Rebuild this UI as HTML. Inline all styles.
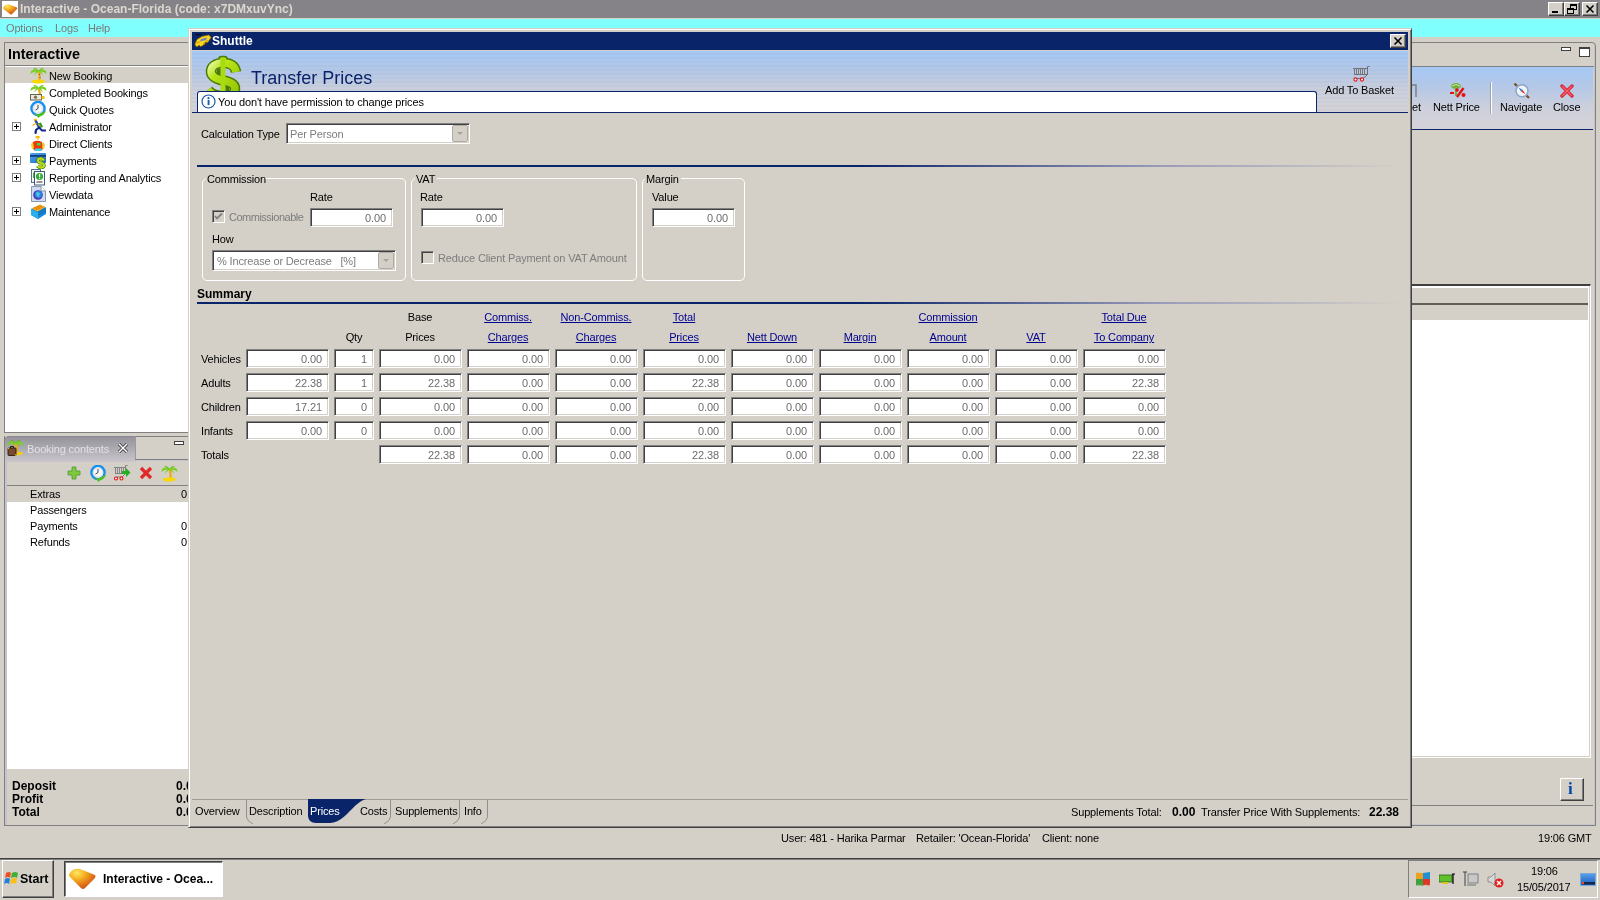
<!DOCTYPE html>
<html><head><meta charset="utf-8"><title>Interactive</title>
<style>
*{margin:0;padding:0;box-sizing:border-box}
html,body{width:1600px;height:900px;overflow:hidden}
body{position:relative;background:#d4d0c8;font-family:"Liberation Sans",sans-serif;font-size:11px;color:#000}
.a{position:absolute}
.t{position:absolute;white-space:nowrap;font-size:11px;line-height:13px;letter-spacing:-0.15px;will-change:transform}
.b{font-weight:bold;font-size:12px;line-height:14px;letter-spacing:0}
.g{color:#7d7d7d}
.f{position:absolute;background:#fff;border:1px solid;border-color:#808080 #fff #fff #808080;box-shadow:inset 1px 1px 0 #404040,inset -1px -1px 0 #d4d0c8}
.f span{position:absolute;right:6px;top:3px;white-space:nowrap;font-size:11px;line-height:13px;color:#6c6c6c;letter-spacing:-0.1px;will-change:transform}
.lk{color:#000090;text-decoration:underline}
.btn{position:absolute;background:#d4d0c8;border:1px solid;border-color:#fff #404040 #404040 #fff;box-shadow:inset -1px -1px 0 #808080}
.grp{position:absolute;border:1px solid #fff;border-radius:5px}
.hl{position:absolute;background:#fff}
</style></head><body>

<!-- ===== Title bar ===== -->
<div class="a" style="left:0;top:0;width:1600px;height:18px;background:#858288"></div>
<div class="a" style="left:2px;top:1px;width:16px;height:16px;background:#fff"></div>
<svg class="a" style="left:2px;top:1px" width="16" height="16"><defs><radialGradient id="tg2" cx="0.3" cy="0.2" r="0.9"><stop offset="0" stop-color="#ffe860"/><stop offset="0.35" stop-color="#f4b020"/><stop offset="0.7" stop-color="#e07018"/><stop offset="1" stop-color="#c04810"/></radialGradient></defs><path d="M1.5 6 Q3 3 7 3.5 L15 6.5 Q15.5 7.5 15 8 L10 13 Q9 14 8 13 L1.5 8 Q1 7 1.5 6Z" fill="url(#tg2)"/></svg>
<div class="t b" style="left:20px;top:2px;color:#dcd8d0">Interactive - Ocean-Florida (code: x7DMxuvYnc)</div>
<div class="btn" style="left:1548px;top:2px;width:16px;height:14px"></div>
<div class="a" style="left:1552px;top:11px;width:6px;height:2px;background:#000"></div>
<div class="btn" style="left:1564px;top:2px;width:16px;height:14px"></div>
<svg class="a" style="left:1564px;top:2px" width="16" height="14"><rect x="6.5" y="2.5" width="6" height="5" fill="none" stroke="#000"/><rect x="6" y="2" width="7" height="2" fill="#000"/><rect x="3.5" y="6.5" width="6" height="5" fill="#d4d0c8" stroke="#000"/><rect x="3" y="6" width="7" height="2" fill="#000"/></svg>
<div class="btn" style="left:1582px;top:2px;width:16px;height:14px"></div>
<svg class="a" style="left:1582px;top:2px" width="16" height="14"><path d="M4.5 3.5 L11.5 10.5 M11.5 3.5 L4.5 10.5" stroke="#000" stroke-width="1.6"/></svg>

<!-- ===== Menu bar ===== -->
<div class="a" style="left:0;top:18px;width:1600px;height:1px;background:#d8d4cc"></div>
<div class="a" style="left:0;top:19px;width:1600px;height:18px;background:#80ffff"></div>
<div class="t" style="left:6px;top:22px;color:#7a7a7a">Options</div>
<div class="t" style="left:55px;top:22px;color:#7a7a7a">Logs</div>
<div class="t" style="left:88px;top:22px;color:#7a7a7a">Help</div>

<!-- ===== Left tree panel ===== -->
<div class="a" style="left:4px;top:42px;width:186px;height:391px;border:1px solid #808080;background:#fff"></div>
<div class="a" style="left:5px;top:43px;width:185px;height:23px;background:#d4d0c8;border-bottom:1px solid #808080"></div>
<div class="a" style="left:5px;top:66px;width:185px;height:1px;background:#fff"></div>
<div class="t b" style="left:8px;top:46px;font-size:14.4px;line-height:16px">Interactive</div>
<div class="a" style="left:5px;top:67px;width:185px;height:16px;background:#d4d0c8"></div>
<div class="t" style="left:49px;top:70px">New Booking</div>
<div class="t" style="left:49px;top:87px">Completed Bookings</div>
<div class="t" style="left:49px;top:104px">Quick Quotes</div>
<div class="t" style="left:49px;top:121px">Administrator</div>
<div class="t" style="left:49px;top:138px">Direct Clients</div>
<div class="t" style="left:49px;top:155px">Payments</div>
<div class="t" style="left:49px;top:172px">Reporting and Analytics</div>
<div class="t" style="left:49px;top:189px">Viewdata</div>
<div class="t" style="left:49px;top:206px">Maintenance</div>
<!-- plus boxes -->
<svg class="a" style="left:11px;top:121px" width="11" height="11"><rect x="1.5" y="1.5" width="8" height="8" fill="#fff" stroke="#808080"/><path d="M3 5.5h5M5.5 3v5" stroke="#000"/></svg>
<svg class="a" style="left:11px;top:155px" width="11" height="11"><rect x="1.5" y="1.5" width="8" height="8" fill="#fff" stroke="#808080"/><path d="M3 5.5h5M5.5 3v5" stroke="#000"/></svg>
<svg class="a" style="left:11px;top:172px" width="11" height="11"><rect x="1.5" y="1.5" width="8" height="8" fill="#fff" stroke="#808080"/><path d="M3 5.5h5M5.5 3v5" stroke="#000"/></svg>
<svg class="a" style="left:11px;top:206px" width="11" height="11"><rect x="1.5" y="1.5" width="8" height="8" fill="#fff" stroke="#808080"/><path d="M3 5.5h5M5.5 3v5" stroke="#000"/></svg>
<!-- tree icons -->
<svg class="a" style="left:30px;top:67px" width="17" height="17"><path d="M8.5 4 Q10 8 9.5 13" stroke="#e8a818" stroke-width="2.2" fill="none"/><path d="M9 7 L10 8 M9.5 10 L10.5 11" stroke="#a05010" stroke-width="1"/><path d="M8.5 3.5 Q5 1 1 4 L0.5 7 Q3 4.5 6 4.5 L3.5 9 Q6 6 8.5 4.5Z" fill="#78d020"/><path d="M8.5 3.5 Q12 1 16 4 L16.5 7 Q14 4.5 11 4.5 L13.5 9 Q11 6 8.5 4.5Z" fill="#78d020"/><path d="M8.5 4 Q6 0 3 1.5 Q6 1.5 8.5 4Z M8.5 4 Q11 0 14 1.5 Q11 1.5 8.5 4Z" fill="#58b818"/><path d="M1.5 14.5 Q3 12 8 12.5 Q14 12 15 14.5 Q13 16.5 8 16.5 Q3 16.5 1.5 14.5Z" fill="#f8d800"/></svg>
<svg class="a" style="left:30px;top:84px" width="17" height="17"><path d="M8.5 4 Q10 8 10 12" stroke="#e8a818" stroke-width="2.2" fill="none"/><path d="M8.5 3.5 Q5 1 1 4 L0.5 7 Q3 4.5 6 4.5 L3.5 9 Q6 6 8.5 4.5Z" fill="#78d020"/><path d="M8.5 3.5 Q12 1 16 4 L16.5 7 Q14 4.5 11 4.5 L13.5 9 Q11 6 8.5 4.5Z" fill="#78d020"/><path d="M8.5 4 Q6 0 3 1.5 Q6 1.5 8.5 4Z M8.5 4 Q11 0 14 1.5 Q11 1.5 8.5 4Z" fill="#58b818"/><rect x="0.5" y="10.5" width="11" height="5.5" fill="#e8ecd8" stroke="#606050"/><circle cx="5.5" cy="13.2" r="1.6" fill="#806868"/><path d="M11.5 12 h3 v3 h-3z" fill="#f0c010"/></svg>
<svg class="a" style="left:30px;top:101px" width="17" height="17"><circle cx="8" cy="7.5" r="6.6" fill="#fff" stroke="#1890f0" stroke-width="2.4"/><circle cx="8" cy="7.5" r="4.6" fill="#f8f8f8" stroke="#c0c8d0" stroke-width="0.6"/><path d="M8 4v3.5l-2.5 1.5" stroke="#404040" stroke-width="1" fill="none"/><path d="M3 12.5 Q8 15 13 11 L16 10 Q14 14.5 10 15.5 L8.5 17 L6 14 Q4 14 3 12.5Z" fill="#50c020"/></svg>
<svg class="a" style="left:30px;top:118px" width="16" height="17"><ellipse cx="5.5" cy="2" rx="1.8" ry="1.6" fill="#f8c820"/><path d="M6 3.5 L9 9" stroke="#3048a8" stroke-width="2.6" stroke-linecap="round"/><path d="M6.5 5 L2.5 7.5" stroke="#f0b020" stroke-width="1.3"/><path d="M8 5.5 L11 4.5 L13 9 L10 10Z" fill="#30a020"/><path d="M8.5 6 L10 9" stroke="#f0c020" stroke-width="1"/><path d="M9 9.5 L6 12 L5.5 15" stroke="#102890" stroke-width="2.2" fill="none" stroke-linecap="round"/><path d="M9 9.5 L12 12.5 L15.5 12.5" stroke="#102890" stroke-width="1.8" fill="none" stroke-linecap="round"/></svg>
<svg class="a" style="left:30px;top:135px" width="16" height="17"><path d="M5.5 2.5 Q7.5 0.5 9.5 2 Q8 3 6.5 2.5 Q9 3.5 7.5 4.5" stroke="#f8b810" stroke-width="1.3" fill="none"/><path d="M3 7 Q7 4.5 12 7 L13.5 13 L11 16 H5 L2.5 13Z" fill="#f03810"/><path d="M1 10 Q1.5 7.5 3 7 L4 13 L2 14Z M15 10 Q14.5 7.5 13 7 L12 13 L14 14Z" fill="#f8d020"/><rect x="7" y="8" width="3.5" height="2.5" fill="#30e040"/><rect x="5" y="13.5" width="6.5" height="2.5" fill="#30d8e8"/></svg>
<svg class="a" style="left:30px;top:152px" width="17" height="17"><defs><linearGradient id="cg" x1="0" y1="0" x2="1" y2="1"><stop offset="0" stop-color="#50a8f0"/><stop offset="1" stop-color="#1868c0"/></linearGradient></defs><rect x="0" y="1" width="16" height="10" rx="1" fill="url(#cg)"/><rect x="0" y="3" width="16" height="1.8" fill="#104080"/><path d="M14 8.5 Q13 6.5 10.5 6.5 Q8 6.5 8 8.5 Q8 10.5 11 11 Q14 11.5 14 13.5 Q14 15.5 11 15.5 Q8.5 15.5 7.5 14" stroke="#4a8010" stroke-width="3.4" fill="none"/><path d="M14 8.5 Q13 6.5 10.5 6.5 Q8 6.5 8 8.5 Q8 10.5 11 11 Q14 11.5 14 13.5 Q14 15.5 11 15.5 Q8.5 15.5 7.5 14" stroke="#c0e020" stroke-width="2" fill="none"/><path d="M11 5 V17" stroke="#a8d018" stroke-width="1.4"/></svg>
<svg class="a" style="left:30px;top:169px" width="17" height="17"><rect x="1.5" y="0.5" width="9" height="13" fill="#f0f4f8" stroke="#507090"/><path d="M3 4 Q5 2 7 4 V9 H3Z" fill="#40b040"/><rect x="4.5" y="2.5" width="10" height="13.5" fill="#fff" stroke="#405870"/><circle cx="9.5" cy="7.5" r="3.6" fill="#30b030"/><rect x="9" y="5" width="1.2" height="3" fill="#fff"/><rect x="9" y="8.8" width="1.2" height="1.2" fill="#fff"/><rect x="6.5" y="12.5" width="6" height="1" fill="#303030"/></svg>
<svg class="a" style="left:30px;top:186px" width="17" height="17"><path d="M1.5 0.5 H11 L15.5 5 V15.5 H1.5Z" fill="#d0dcf0" stroke="#8898b0"/><path d="M11 0.5 V5 H15.5" fill="#fff" stroke="#8898b0"/><circle cx="8" cy="9" r="4.8" fill="#5030b0"/><circle cx="8.5" cy="8.5" r="3.8" fill="#3080e0"/><path d="M6 6.5 Q8.5 5.5 10 7.5 Q8.5 9 9.5 11 Q7 11 6.5 9Z" fill="#40d0e0"/></svg>
<svg class="a" style="left:30px;top:203px" width="17" height="17"><path d="M1 6 L10 2 L16 4.5 L16 11 L8 16 L1 12Z" fill="#1888d8"/><path d="M1 6 L8 9.5 L8 16 L1 12Z" fill="#2ab0f0"/><path d="M1.5 5.5 L10 1.5 L15.5 4 L7.5 8.5Z" fill="#f8c020"/><path d="M3 5.5 L10.5 2.3 M4.5 6.3 L12 3 M6 7.1 L13.5 3.8" stroke="#e07010" stroke-width="0.9"/><path d="M8 9.5 L16 5.5 M8 12 L16 8" stroke="#0a5aa0" stroke-width="0.7"/></svg>

<!-- ===== Booking contents panel ===== -->
<div class="a" style="left:4px;top:436px;width:186px;height:390px;border:1px solid #808080;border-top:none;background:#d4d0c8"></div>
<div class="a" style="left:4px;top:436px;width:132px;height:26px;border-radius:5px 0 0 0;border-left:1px solid #808080;border-top:1px solid #8a8890;background:linear-gradient(#96939c,#a9a7ae 40%,#c9c7cc)"></div>
<div class="a" style="left:136px;top:436px;width:54px;height:1px;background:#808080"></div>
<div class="a" style="left:135px;top:436px;width:1px;height:24px;background:#9a98a0"></div>
<div class="a" style="left:135px;top:459px;width:55px;height:1px;background:#808080"></div><div class="a" style="left:135px;top:460px;width:55px;height:1px;background:#c4c2cc"></div>
<div class="a" style="left:174px;top:441px;width:10px;height:4px;border:1px solid #404040;background:#fff"></div>
<svg class="a" style="left:7px;top:439px" width="17" height="18"><path d="M8.5 4 Q10 8 10 13" stroke="#e8a818" stroke-width="2.2" fill="none"/><path d="M8.5 3.5 Q5 1 1 4 L0.5 7 Q3 4.5 6 4.5 L3.5 9 Q6 6 8.5 4.5Z" fill="#78d020"/><path d="M8.5 3.5 Q12 1 16 4 L16.5 7 Q14 4.5 11 4.5 L13.5 9 Q11 6 8.5 4.5Z" fill="#78d020"/><path d="M8.5 4 Q6 0 3 1.5 Q6 1.5 8.5 4Z M8.5 4 Q11 0 14 1.5 Q11 1.5 8.5 4Z" fill="#58b818"/><path d="M9 14.5 Q11 12.5 14 13 Q16 13.5 16 15 Q13 16.5 9 16Z" fill="#f8d000"/><rect x="1" y="9" width="8" height="7.5" rx="0.8" fill="#7a4a30" stroke="#201008" stroke-width="0.8"/><path d="M3.5 9 V7.5 H6.5 V9" stroke="#201008" fill="none" stroke-width="0.9"/><circle cx="1.5" cy="9.5" r="0.7" fill="#f0c010"/><circle cx="8.5" cy="16" r="0.7" fill="#f0c010"/></svg>
<div class="t" style="left:27px;top:443px;color:#e2e0e4;font-size:11px">Booking contents</div>
<svg class="a" style="left:117px;top:442px" width="12" height="12"><path d="M2 2 L10 10 M10 2 L2 10" stroke="#202020" stroke-width="3"/><path d="M2 2 L10 10 M10 2 L2 10" stroke="#fff" stroke-width="1.6"/></svg>
<div class="a" style="left:5px;top:461px;width:2px;height:364px;background:#c4c2cc"></div>
<!-- toolbar icons -->
<svg class="a" style="left:67px;top:466px" width="14" height="14"><path d="M5 1h4v4h4v4h-4v4h-4v-4h-4v-4h4z" fill="#80c840" stroke="#4a9a30" stroke-width="0.8"/></svg>
<svg class="a" style="left:90px;top:465px" width="17" height="17"><circle cx="8" cy="7.5" r="6.6" fill="#fff" stroke="#1890f0" stroke-width="2.4"/><circle cx="8" cy="7.5" r="4.6" fill="#f8f8f8" stroke="#c0c8d0" stroke-width="0.6"/><path d="M8 4v3.5l-2.5 1.5" stroke="#404040" stroke-width="1" fill="none"/><path d="M3 12.5 Q8 15 13 11 L16 10 Q14 14.5 10 15.5 L8.5 17 L6 14 Q4 14 3 12.5Z" fill="#50c020"/></svg>
<svg class="a" style="left:113px;top:465px" width="18" height="17"><path d="M1 2.5H12M2 8.5H12" stroke="#808080"/><path d="M2.5 2v6M4.5 2v6M6.5 2v6M8.5 2v6M10.5 2v6" stroke="#888"/><path d="M12.5 9V0.5H14.5M12 9L9 12H3" stroke="#808080" fill="none"/><circle cx="3" cy="13.5" r="1.5" fill="#fff" stroke="#e81010" stroke-width="1.1"/><circle cx="8.5" cy="13.5" r="1.5" fill="#fff" stroke="#e81010" stroke-width="1.1"/><path d="M9 6h4v-3l4.5 4.5-4.5 4.5v-3h-4z" fill="#20b020"/></svg>
<svg class="a" style="left:139px;top:466px" width="14" height="14"><path d="M2 2 L12 12 M12 2 L2 12" stroke="#e02828" stroke-width="3.2"/></svg>
<svg class="a" style="left:161px;top:465px" width="17" height="17"><path d="M8.5 4 Q10 8 9.5 13" stroke="#e8a818" stroke-width="2.2" fill="none"/><path d="M8.5 3.5 Q5 1 1 4 L0.5 7 Q3 4.5 6 4.5 L3.5 9 Q6 6 8.5 4.5Z" fill="#78d020"/><path d="M8.5 3.5 Q12 1 16 4 L16.5 7 Q14 4.5 11 4.5 L13.5 9 Q11 6 8.5 4.5Z" fill="#78d020"/><path d="M8.5 4 Q6 0 3 1.5 Q6 1.5 8.5 4Z M8.5 4 Q11 0 14 1.5 Q11 1.5 8.5 4Z" fill="#58b818"/><path d="M1.5 14.5 Q3 12 8 12.5 Q14 12 15 14.5 Q13 16.5 8 16.5 Q3 16.5 1.5 14.5Z" fill="#f8d800"/></svg>
<div class="a" style="left:7px;top:485px;width:183px;height:1px;background:#808080"></div>
<div class="a" style="left:7px;top:486px;width:183px;height:283px;background:#fff"></div>
<div class="a" style="left:7px;top:486px;width:183px;height:16px;background:#d4d0c8"></div>
<div class="t" style="left:30px;top:488px">Extras</div>
<div class="t" style="left:181px;top:488px">0</div>
<div class="t" style="left:30px;top:504px">Passengers</div>
<div class="t" style="left:30px;top:520px">Payments</div>
<div class="t" style="left:181px;top:520px">0</div>
<div class="t" style="left:30px;top:536px">Refunds</div>
<div class="t" style="left:181px;top:536px">0</div>
<div class="t b" style="left:12px;top:779px">Deposit</div>
<div class="t b" style="left:12px;top:792px">Profit</div>
<div class="t b" style="left:12px;top:805px">Total</div>
<div class="t b" style="left:176px;top:779px">0.00</div>
<div class="t b" style="left:176px;top:792px">0.00</div>
<div class="t b" style="left:176px;top:805px">0.00</div>

<!--LEFT-->
<!-- ===== Right background panel ===== -->
<div class="a" style="left:1300px;top:42px;width:296px;height:784px;border:1px solid #808080;border-radius:0 4px 0 0;background:#d4d0c8;box-shadow:inset -1px -1px 0 #c4c2cc"></div>
<div class="a" style="left:1300px;top:66px;width:294px;height:1px;background:#808080"></div>
<div class="a" style="left:1561px;top:47px;width:10px;height:4px;border:1px solid #404040;background:#fff"></div>
<div class="a" style="left:1579px;top:47px;width:11px;height:10px;border:1px solid #404040;border-top-width:2px;background:#fff"></div>
<div class="a" style="left:1300px;top:67px;width:293px;height:62px;background:linear-gradient(#a5c8f5,#b6c8e6 35%,#ccd0dc 65%,#d6d3d8)"></div>
<div class="a" style="left:1300px;top:129px;width:293px;height:1px;background:#0a246a"></div>
<div class="t" style="left:1352px;top:101px">Add To Basket</div>
<svg class="a" style="left:1412px;top:83px" width="6" height="16"><path d="M0 2h4v12" stroke="#808080" fill="none" stroke-width="1.5"/></svg>
<div class="t" style="left:1433px;top:101px">Nett Price</div>
<svg class="a" style="left:1449px;top:82px" width="18" height="17"><ellipse cx="7" cy="4" rx="5" ry="3" fill="#78b040"/><path d="M3 4 Q7 1 11 4" stroke="#c8e0a0" fill="none"/><path d="M7 6 v8" stroke="#78b040" stroke-width="2"/><rect x="1" y="10" width="4" height="2" fill="#e81010"/><circle cx="8" cy="8" r="1.8" fill="#e81010"/><circle cx="14.5" cy="13" r="2" fill="#e81010"/><path d="M14.5 6 L8 15" stroke="#e81010" stroke-width="2.4"/></svg>
<div class="a" style="left:1490px;top:82px;width:1px;height:32px;background:#a0a0a8"></div>
<div class="a" style="left:1491px;top:82px;width:1px;height:32px;background:#fff"></div>
<svg class="a" style="left:1513px;top:82px" width="18" height="18"><path d="M1.5 1.5 L4 4 M16 16 L13.5 13.5" stroke="#7a5028" stroke-width="2.4"/><circle cx="9" cy="8.8" r="6" fill="#f0f4f8" stroke="#8aa8c8" stroke-width="1.6"/><path d="M5.5 5.5 L9.8 8 L8 9.6Z" fill="#2878d8"/><path d="M12.5 12.2 L8 9.6 L9.8 8Z" fill="#e83020"/></svg>
<div class="t" style="left:1500px;top:101px">Navigate</div>
<svg class="a" style="left:1560px;top:84px" width="14" height="14"><path d="M2 2 L12 12 M12 2 L2 12" stroke="#d82838" stroke-width="3.4" stroke-linecap="round"/><path d="M2.5 2.5 L11.5 11.5 M11.5 2.5 L2.5 11.5" stroke="#f86070" stroke-width="1.2" stroke-linecap="round"/></svg>
<div class="t" style="left:1553px;top:101px">Close</div>
<div class="a" style="left:1300px;top:284px;width:291px;height:474px;background:#fff;border-top:2px solid #404040;border-right:1px solid #fff;border-bottom:1px solid #fff;box-shadow:inset -1px -1px 0 #d4d0c8"></div>
<div class="a" style="left:1300px;top:288px;width:288px;height:15px;background:#d4d0c8"></div>
<div class="a" style="left:1300px;top:303px;width:288px;height:2px;background:#5e5e5a"></div>
<div class="a" style="left:1300px;top:305px;width:288px;height:15px;background:#d4d0c8"></div>
<div class="btn" style="left:1560px;top:778px;width:24px;height:23px"></div>
<div class="t" style="left:1568px;top:780px;font-family:'Liberation Serif',serif;font-weight:bold;font-size:17px;line-height:18px;color:#0048a8">i</div>
<div class="a" style="left:1300px;top:805px;width:293px;height:1px;background:#808080"></div>

<!--RIGHTPANEL-->
<!-- ===== Dialog ===== -->
<div class="a" style="left:188px;top:28px;width:1224px;height:800px;background:#d4d0c8;border:1px solid;border-color:#d4d0c8 #404040 #404040 #d4d0c8;box-shadow:inset 1px 1px 0 #fff,inset -1px -1px 0 #808080"></div>
<div class="a" style="left:192px;top:32px;width:1216px;height:18px;background:#0a246a"></div>
<svg class="a" style="left:194px;top:33px" width="18" height="16"><path d="M1 11 L3 6.5 L8 3.5 L15 2 L17 4.5 L14 9 L7 13.5 L2 13.5Z" fill="#f8d818" stroke="#a07000" stroke-width="0.7"/><path d="M7 6 L13 4.5 L12 7 L6 8.5Z" fill="#7080c8"/><path d="M2 10 L6 9 M9 11 L14 7" stroke="#e09010" stroke-width="1"/><path d="M1.5 2 L3 1 L4.5 2 L6 1 L7.5 2" stroke="#000" fill="none" stroke-width="1"/><circle cx="5" cy="13.5" r="1.2" fill="#303030"/><circle cx="12" cy="10.5" r="1.2" fill="#303030"/></svg>
<div class="t b" style="left:212px;top:34px;color:#fff">Shuttle</div>
<div class="btn" style="left:1390px;top:34px;width:16px;height:14px"></div>
<svg class="a" style="left:1390px;top:34px" width="16" height="14"><path d="M4.5 3.5 L11.5 10.5 M11.5 3.5 L4.5 10.5" stroke="#000" stroke-width="1.6"/></svg>
<div class="a" style="left:192px;top:51px;width:1216px;height:61px;background:linear-gradient(#a5c8f5,#b6c8e6 35%,#ccd0dc 65%,#d6d3d8)"></div>
<div class="a" style="left:192px;top:51px;width:1216px;height:61px;background:repeating-linear-gradient(rgba(255,255,255,0) 0px,rgba(255,255,255,0) 2px,rgba(120,140,170,0.07) 2px,rgba(120,140,170,0.07) 4px)"></div>
<!-- dollar -->
<svg class="a" style="left:205px;top:55px" width="37" height="37"><defs><linearGradient id="dg" x1="0" y1="0" x2="1" y2="1"><stop offset="0" stop-color="#eefab8"/><stop offset="0.3" stop-color="#b8e418"/><stop offset="1" stop-color="#94c408"/></linearGradient></defs>
<path d="M31 17 C30 10 25 8 18 8 C10 8 6 12 6 16.5 C6 22 11 24 18 25.5 C26 27 30 29 30 33.5 C30 39 24 41 18 41 C11 41 6 39 3 35" fill="none" stroke="#4a7a00" stroke-width="10.5"/>
<rect x="14" y="1.5" width="8" height="8" rx="2.5" fill="#b0dc20" stroke="#4a7a00" stroke-width="1.6"/>
<path d="M31 17 C30 10 25 8 18 8 C10 8 6 12 6 16.5 C6 22 11 24 18 25.5 C26 27 30 29 30 33.5 C30 39 24 41 18 41 C11 41 6 39 3 35" fill="none" stroke="url(#dg)" stroke-width="7.5"/>
<rect x="15.5" y="3" width="5" height="34" fill="#a8dc10"/>
<path d="M12.5 14 Q11 16.5 12.5 19 L15.5 19.5 L15.5 13.5Z M23.5 31 Q25 33.5 23.5 37 L20.5 37 L20.5 31Z" fill="#4a7a00"/></svg>
<div class="t" style="left:251px;top:68px;font-size:18px;line-height:20px;color:#0a246a;letter-spacing:0">Transfer Prices</div>
<!-- message box -->
<div class="a" style="left:197px;top:91px;width:1120px;height:22px;background:#fff;border:1px solid #0a246a;border-bottom:none;border-radius:3px 3px 0 0"></div>
<div class="a" style="left:192px;top:112px;width:1216px;height:1px;background:#0a246a"></div>
<svg class="a" style="left:201px;top:94px" width="15" height="15"><circle cx="7.5" cy="7.5" r="6.5" fill="#fff" stroke="#1a5aa8" stroke-width="1.2"/><rect x="6.6" y="6" width="1.9" height="5" fill="#1a5aa8"/><circle cx="7.5" cy="4.2" r="1.1" fill="#1a5aa8"/></svg>
<div class="t" style="left:218px;top:96px">You don't have permission to change prices</div>
<!-- add to basket -->
<svg class="a" style="left:1352px;top:65px" width="18" height="18"><path d="M1 3.5H15M2 9.5H15" stroke="#707070"/><path d="M2.5 3v6M4.5 3v6M6.5 3v6M8.5 3v6M10.5 3v6M12.5 3v6" stroke="#787878"/><path d="M15.5 10V1.5H17.5M15 10L11 13.5H4" stroke="#707070" fill="none"/><circle cx="3.5" cy="14.5" r="1.6" fill="#fff" stroke="#e81010" stroke-width="1.1"/><circle cx="10" cy="14.5" r="1.6" fill="#fff" stroke="#e81010" stroke-width="1.1"/></svg>
<div class="t" style="left:1325px;top:84px">Add To Basket</div>

<!-- calculation type -->
<div class="t" style="left:201px;top:128px">Calculation Type</div>
<div class="f" style="left:286px;top:123px;width:184px;height:21px"></div>
<div class="t g" style="left:290px;top:128px">Per Person</div>
<div class="a" style="left:452px;top:125px;width:16px;height:17px;background:#d4d0c8;border:1px solid #b0aca4;border-radius:2px"></div>
<svg class="a" style="left:452px;top:125px" width="16" height="17"><path d="M5 7h6l-3 3z" fill="#a8a49c"/></svg>
<div class="a" style="left:197px;top:165px;width:1206px;height:2px;background:linear-gradient(90deg,#0a246a 0%,#0a246a 55%,#9a9cb8 80%,#d4d0c8 100%)"></div>

<!-- group boxes -->
<div class="grp" style="left:202px;top:178px;width:204px;height:103px"></div>
<div class="a" style="left:206px;top:173px;width:57px;height:10px;background:#d4d0c8"></div>
<div class="t" style="left:207px;top:173px">Commission</div>
<div class="t" style="left:310px;top:191px">Rate</div>
<div class="a" style="left:212px;top:210px;width:13px;height:13px;border:1px solid;border-color:#808080 #fff #fff #808080;box-shadow:inset 1px 1px 0 #404040,inset -1px -1px 0 #d4d0c8;background:#d4d0c8"></div>
<svg class="a" style="left:212px;top:210px" width="13" height="13"><path d="M3 6 L5 8.5 L10 3.5" stroke="#808080" stroke-width="1.8" fill="none"/></svg>
<div class="t g" style="left:229px;top:211px;letter-spacing:-0.5px">Commissionable</div>
<div class="f" style="left:310px;top:208px;width:83px;height:19px"><span>0.00</span></div>
<div class="t" style="left:212px;top:233px">How</div>
<div class="f" style="left:212px;top:250px;width:184px;height:21px"></div>
<div class="t g" style="left:217px;top:255px">% Increase or Decrease &nbsp; [%]</div>
<div class="a" style="left:378px;top:252px;width:16px;height:17px;background:#d4d0c8;border:1px solid #b0aca4;border-radius:2px"></div>
<svg class="a" style="left:378px;top:252px" width="16" height="17"><path d="M5 7h6l-3 3z" fill="#a8a49c"/></svg>

<div class="grp" style="left:411px;top:178px;width:226px;height:103px"></div>
<div class="a" style="left:415px;top:173px;width:22px;height:10px;background:#d4d0c8"></div>
<div class="t" style="left:416px;top:173px">VAT</div>
<div class="t" style="left:420px;top:191px">Rate</div>
<div class="f" style="left:421px;top:208px;width:83px;height:19px"><span>0.00</span></div>
<div class="a" style="left:421px;top:251px;width:13px;height:13px;border:1px solid;border-color:#808080 #fff #fff #808080;box-shadow:inset 1px 1px 0 #404040,inset -1px -1px 0 #d4d0c8;background:#d4d0c8"></div>
<div class="t g" style="left:438px;top:252px">Reduce Client Payment on VAT Amount</div>

<div class="grp" style="left:642px;top:178px;width:103px;height:103px"></div>
<div class="a" style="left:645px;top:173px;width:36px;height:10px;background:#d4d0c8"></div>
<div class="t" style="left:646px;top:173px">Margin</div>
<div class="t" style="left:652px;top:191px">Value</div>
<div class="f" style="left:652px;top:208px;width:83px;height:19px"><span>0.00</span></div>

<!-- summary -->
<div class="t b" style="left:197px;top:287px">Summary</div>
<div class="a" style="left:197px;top:302px;width:1206px;height:2px;background:linear-gradient(90deg,#0a246a 0%,#0a246a 55%,#9a9cb8 80%,#d4d0c8 100%)"></div>
<div class="t" style="left:294px;top:331px;width:120px;text-align:center">Qty</div>
<div class="t" style="left:360px;top:311px;width:120px;text-align:center">Base</div>
<div class="t" style="left:360px;top:331px;width:120px;text-align:center">Prices</div>
<div class="t lk" style="left:448px;top:311px;width:120px;text-align:center">Commiss.</div>
<div class="t lk" style="left:448px;top:331px;width:120px;text-align:center">Charges</div>
<div class="t lk" style="left:536px;top:311px;width:120px;text-align:center">Non-Commiss.</div>
<div class="t lk" style="left:536px;top:331px;width:120px;text-align:center">Charges</div>
<div class="t lk" style="left:624px;top:311px;width:120px;text-align:center">Total</div>
<div class="t lk" style="left:624px;top:331px;width:120px;text-align:center">Prices</div>
<div class="t lk" style="left:712px;top:331px;width:120px;text-align:center">Nett Down</div>
<div class="t lk" style="left:800px;top:331px;width:120px;text-align:center">Margin</div>
<div class="t lk" style="left:888px;top:311px;width:120px;text-align:center">Commission</div>
<div class="t lk" style="left:888px;top:331px;width:120px;text-align:center">Amount</div>
<div class="t lk" style="left:976px;top:331px;width:120px;text-align:center">VAT</div>
<div class="t lk" style="left:1064px;top:311px;width:120px;text-align:center">Total Due</div>
<div class="t lk" style="left:1064px;top:331px;width:120px;text-align:center">To Company</div>
<div class="t" style="left:201px;top:353px">Vehicles</div>
<div class="f" style="left:246px;top:349px;width:83px;height:19px"><span>0.00</span></div>
<div class="f" style="left:334px;top:349px;width:40px;height:19px"><span>1</span></div>
<div class="f" style="left:379px;top:349px;width:83px;height:19px"><span>0.00</span></div>
<div class="f" style="left:467px;top:349px;width:83px;height:19px"><span>0.00</span></div>
<div class="f" style="left:555px;top:349px;width:83px;height:19px"><span>0.00</span></div>
<div class="f" style="left:643px;top:349px;width:83px;height:19px"><span>0.00</span></div>
<div class="f" style="left:731px;top:349px;width:83px;height:19px"><span>0.00</span></div>
<div class="f" style="left:819px;top:349px;width:83px;height:19px"><span>0.00</span></div>
<div class="f" style="left:907px;top:349px;width:83px;height:19px"><span>0.00</span></div>
<div class="f" style="left:995px;top:349px;width:83px;height:19px"><span>0.00</span></div>
<div class="f" style="left:1083px;top:349px;width:83px;height:19px"><span>0.00</span></div>
<div class="t" style="left:201px;top:377px">Adults</div>
<div class="f" style="left:246px;top:373px;width:83px;height:19px"><span>22.38</span></div>
<div class="f" style="left:334px;top:373px;width:40px;height:19px"><span>1</span></div>
<div class="f" style="left:379px;top:373px;width:83px;height:19px"><span>22.38</span></div>
<div class="f" style="left:467px;top:373px;width:83px;height:19px"><span>0.00</span></div>
<div class="f" style="left:555px;top:373px;width:83px;height:19px"><span>0.00</span></div>
<div class="f" style="left:643px;top:373px;width:83px;height:19px"><span>22.38</span></div>
<div class="f" style="left:731px;top:373px;width:83px;height:19px"><span>0.00</span></div>
<div class="f" style="left:819px;top:373px;width:83px;height:19px"><span>0.00</span></div>
<div class="f" style="left:907px;top:373px;width:83px;height:19px"><span>0.00</span></div>
<div class="f" style="left:995px;top:373px;width:83px;height:19px"><span>0.00</span></div>
<div class="f" style="left:1083px;top:373px;width:83px;height:19px"><span>22.38</span></div>
<div class="t" style="left:201px;top:401px">Children</div>
<div class="f" style="left:246px;top:397px;width:83px;height:19px"><span>17.21</span></div>
<div class="f" style="left:334px;top:397px;width:40px;height:19px"><span>0</span></div>
<div class="f" style="left:379px;top:397px;width:83px;height:19px"><span>0.00</span></div>
<div class="f" style="left:467px;top:397px;width:83px;height:19px"><span>0.00</span></div>
<div class="f" style="left:555px;top:397px;width:83px;height:19px"><span>0.00</span></div>
<div class="f" style="left:643px;top:397px;width:83px;height:19px"><span>0.00</span></div>
<div class="f" style="left:731px;top:397px;width:83px;height:19px"><span>0.00</span></div>
<div class="f" style="left:819px;top:397px;width:83px;height:19px"><span>0.00</span></div>
<div class="f" style="left:907px;top:397px;width:83px;height:19px"><span>0.00</span></div>
<div class="f" style="left:995px;top:397px;width:83px;height:19px"><span>0.00</span></div>
<div class="f" style="left:1083px;top:397px;width:83px;height:19px"><span>0.00</span></div>
<div class="t" style="left:201px;top:425px">Infants</div>
<div class="f" style="left:246px;top:421px;width:83px;height:19px"><span>0.00</span></div>
<div class="f" style="left:334px;top:421px;width:40px;height:19px"><span>0</span></div>
<div class="f" style="left:379px;top:421px;width:83px;height:19px"><span>0.00</span></div>
<div class="f" style="left:467px;top:421px;width:83px;height:19px"><span>0.00</span></div>
<div class="f" style="left:555px;top:421px;width:83px;height:19px"><span>0.00</span></div>
<div class="f" style="left:643px;top:421px;width:83px;height:19px"><span>0.00</span></div>
<div class="f" style="left:731px;top:421px;width:83px;height:19px"><span>0.00</span></div>
<div class="f" style="left:819px;top:421px;width:83px;height:19px"><span>0.00</span></div>
<div class="f" style="left:907px;top:421px;width:83px;height:19px"><span>0.00</span></div>
<div class="f" style="left:995px;top:421px;width:83px;height:19px"><span>0.00</span></div>
<div class="f" style="left:1083px;top:421px;width:83px;height:19px"><span>0.00</span></div>
<div class="t" style="left:201px;top:449px">Totals</div>
<div class="f" style="left:379px;top:445px;width:83px;height:19px"><span>22.38</span></div>
<div class="f" style="left:467px;top:445px;width:83px;height:19px"><span>0.00</span></div>
<div class="f" style="left:555px;top:445px;width:83px;height:19px"><span>0.00</span></div>
<div class="f" style="left:643px;top:445px;width:83px;height:19px"><span>22.38</span></div>
<div class="f" style="left:731px;top:445px;width:83px;height:19px"><span>0.00</span></div>
<div class="f" style="left:819px;top:445px;width:83px;height:19px"><span>0.00</span></div>
<div class="f" style="left:907px;top:445px;width:83px;height:19px"><span>0.00</span></div>
<div class="f" style="left:995px;top:445px;width:83px;height:19px"><span>0.00</span></div>
<div class="f" style="left:1083px;top:445px;width:83px;height:19px"><span>22.38</span></div>
<!--TABLE-->

<!-- tab strip -->
<div class="a" style="left:192px;top:799px;width:1216px;height:1px;background:#a09c94"></div>
<svg class="a" style="left:300px;top:799px" width="75" height="25"><path d="M8 0 H66 C60 2 57 5 52 10 C45 17 40 23 30 24 H16 C10 24 8 20 8 16Z" fill="#0a246a"/></svg>
<svg class="a" style="left:240px;top:800px" width="260" height="25"><path d="M6.5 0 V17 Q7 21 13 24" stroke="#909090" fill="none"/><path d="M150.5 0 V17 Q150 21 144 24" stroke="#909090" fill="none"/><path d="M219.5 0 V17 Q219 21 213 24" stroke="#909090" fill="none"/><path d="M247.5 0 V17 Q247 21 241 24" stroke="#909090" fill="none"/></svg>
<div class="t" style="left:195px;top:805px">Overview</div>
<div class="t" style="left:249px;top:805px">Description</div>
<div class="t" style="left:310px;top:805px;color:#fff">Prices</div>
<div class="t" style="left:360px;top:805px">Costs</div>
<div class="t" style="left:395px;top:805px">Supplements</div>
<div class="t" style="left:464px;top:805px">Info</div>
<div class="t" style="left:1071px;top:806px">Supplements Total:</div>
<div class="t b" style="left:1172px;top:805px">0.00</div>
<div class="t" style="left:1201px;top:806px">Transfer Price With Supplements:</div>
<div class="t b" style="left:1369px;top:805px">22.38</div>

<!--DIALOG-->
<!-- ===== Status bar ===== -->
<div class="t" style="left:781px;top:832px">User: 481 - Harika Parmar</div>
<div class="t" style="left:916px;top:832px">Retailer: 'Ocean-Florida'</div>
<div class="t" style="left:1042px;top:832px">Client: none</div>
<div class="t" style="left:1538px;top:832px">19:06 GMT</div>

<!--STATUS-->
<!-- ===== Taskbar ===== -->
<div class="a" style="left:0;top:858px;width:1600px;height:42px;background:#d4d0c8;border-top:1px solid #404040;box-shadow:inset 0 1px 0 #808080"></div>
<div class="btn" style="left:2px;top:860px;width:52px;height:38px"></div>
<svg class="a" style="left:4px;top:870px" width="16" height="16"><path d="M2 3 Q5 1 7 3 L6 8 Q4 6 1 8Z" fill="#f05020"/><path d="M8 3 Q11 1 14 3 L13 8 Q11 6 7 8Z" fill="#40b030"/><path d="M1 9 Q4 7 6 9 L5 14 Q3 12 0 14Z" fill="#2080e0"/><path d="M7 9 Q10 7 13 9 L12 14 Q10 12 6 14Z" fill="#f8c010"/></svg>
<div class="t b" style="left:20px;top:872px;font-size:12.5px">Start</div>
<div class="a" style="left:64px;top:861px;width:159px;height:36px;background:#fff;border:1px solid;border-color:#404040 #fff #fff #404040;box-shadow:inset 1px 1px 0 #808080"></div>
<svg class="a" style="left:68px;top:867px" width="30" height="24"><defs><radialGradient id="tg" cx="0.3" cy="0.2" r="0.9"><stop offset="0" stop-color="#ffe860"/><stop offset="0.35" stop-color="#f4b020"/><stop offset="0.7" stop-color="#e07018"/><stop offset="1" stop-color="#c04810"/></radialGradient></defs><path d="M2 6 Q5 1 12 2 L27 8 Q28 9 27 11 L17 21 Q15 23 13 21 L2 10 Q0 8 2 6Z" fill="url(#tg)"/></svg>
<div class="t b" style="left:103px;top:872px">Interactive - Ocea...</div>
<div class="a" style="left:1408px;top:860px;width:190px;height:38px;border:1px solid;border-color:#808080 #fff #fff #808080"></div>
<svg class="a" style="left:1415px;top:871px" width="16" height="16"><path d="M1 1 L8 2 L8 8 L1 8Z" fill="#f0a020"/><path d="M8 2 L15 1 L15 8 L8 8Z" fill="#2090d0"/><path d="M1 8 L8 8 L8 15 L1 15Z" fill="#40a040"/><path d="M8 8 L15 8 L15 15 L8 14Z" fill="#e03828"/><path d="M1 2 L3 1 L5 2 L7 1 M1 15 L3 14 L5 15 L7 14 M9 15 L11 14 L13 15 L15 14" stroke="#d4d0c8" stroke-width="0.8" fill="none"/></svg>
<svg class="a" style="left:1439px;top:871px" width="16" height="16"><rect x="0" y="4" width="13" height="7" fill="#60c030" stroke="#306010" stroke-width="0.8"/><rect x="3" y="11" width="6" height="2" fill="#e0c020"/><path d="M14 3 v10 M13 3 h3" stroke="#000" stroke-width="1.2"/></svg>
<svg class="a" style="left:1463px;top:871px" width="16" height="16"><rect x="5" y="3" width="10" height="9" fill="#c8c8c8" stroke="#808080"/><path d="M2 1 v14 M0 1 h4" stroke="#404040" fill="none"/><rect x="4" y="13" width="9" height="2" fill="#a0a0a0"/></svg>
<svg class="a" style="left:1487px;top:871px" width="17" height="17"><path d="M1 6h3l4-4v13l-4-4h-3z" fill="#d8d8d8" stroke="#808080" stroke-width="0.8"/><circle cx="12" cy="12" r="4.5" fill="#e02020"/><path d="M10 10l4 4M14 10l-4 4" stroke="#fff" stroke-width="1.4"/></svg>
<div class="t" style="left:1531px;top:865px">19:06</div>
<div class="t" style="left:1517px;top:881px">15/05/2017</div>
<svg class="a" style="left:1580px;top:873px" width="16" height="13"><defs><linearGradient id="dk" x1="0" y1="0" x2="0" y2="1"><stop offset="0" stop-color="#5aa0e8"/><stop offset="1" stop-color="#1a5cc0"/></linearGradient></defs><rect x="0.5" y="0.5" width="15" height="12" fill="url(#dk)" stroke="#7aa8d8"/><rect x="2" y="9" width="13" height="2.5" fill="#182848"/><circle cx="3" cy="10" r="1.2" fill="#f05020"/></svg>

<!--TASKBAR-->
</body></html>
